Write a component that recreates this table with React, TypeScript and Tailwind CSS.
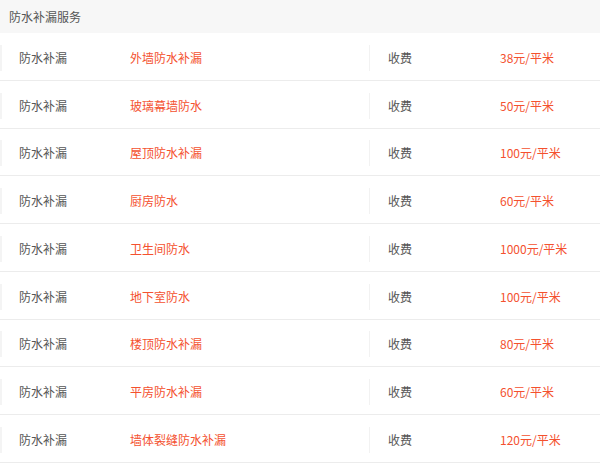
const rows = [
  { name: '外墙防水补漏', price: '38元/平米' },
  { name: '玻璃幕墙防水', price: '50元/平米' },
  { name: '屋顶防水补漏', price: '100元/平米' },
  { name: '厨房防水', price: '60元/平米' },
  { name: '卫生间防水', price: '1000元/平米' },
  { name: '地下室防水', price: '100元/平米' },
  { name: '楼顶防水补漏', price: '80元/平米' },
  { name: '平房防水补漏', price: '60元/平米' },
  { name: '墙体裂缝防水补漏', price: '120元/平米' },
];

export default function App() {
  return (
    <div
      className="w-[600px] h-[472px] bg-white text-[12px] text-[#555]"
      style={{ fontFamily: '"Noto Sans CJK SC", "Liberation Sans", sans-serif' }}
    >
      {/* 标题 */}
      <div className="h-[33px] bg-[#f7f7f7] flex items-center pl-[9px] pt-[1px] text-[12px] text-[#555]">
        防水补漏服务
      </div>

      <ul>
        {rows.map((r) => (
          <li
            key={r.name}
            className="h-[47.75px] flex items-center pt-[3px] border-b border-[#ececec]"
          >
            <div className="w-[2px] h-[26px] bg-[#f4f4f4]" />
            <span className="w-[128px] pl-[17px] shrink-0">防水补漏</span>
            <span className="w-[239px] shrink-0 text-[#f4512f]">{r.name}</span>
            <div className="w-[1px] h-[26px] bg-[#f2f2f2] mr-[18px]" />
            <span className="w-[112px] shrink-0">收费</span>
            <span className="text-[#f4512f]">{r.price}</span>
          </li>
        ))}
      </ul>
    </div>
  );
}
